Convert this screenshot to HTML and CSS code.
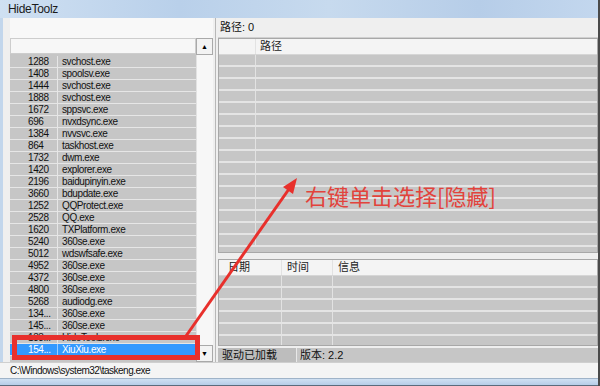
FILE: index.html
```html
<!DOCTYPE html>
<html lang="zh-cn">
<head>
    <meta charset="UTF-8">
    <title>HideToolz</title>
    <link rel="stylesheet" href="styles.css">
</head>
<body>
    <div class="window">
        <div class="titlebar"><span class="title">HideToolz</span></div>

        <div class="main">
            <div class="frame-left"></div>

            <!-- lista de processos -->
            <div class="left">
                <div class="combo"></div>
                <div class="list">
                    <div class="list-body">
                        <div class="list-head"></div>
                        <div class="row"><span class="pid">1288</span><span class="name">svchost.exe</span></div>
                        <div class="row"><span class="pid">1408</span><span class="name">spoolsv.exe</span></div>
                        <div class="row"><span class="pid">1444</span><span class="name">svchost.exe</span></div>
                        <div class="row"><span class="pid">1888</span><span class="name">svchost.exe</span></div>
                        <div class="row"><span class="pid">1672</span><span class="name">sppsvc.exe</span></div>
                        <div class="row"><span class="pid">696</span><span class="name">nvxdsync.exe</span></div>
                        <div class="row"><span class="pid">1384</span><span class="name">nvvsvc.exe</span></div>
                        <div class="row"><span class="pid">864</span><span class="name">taskhost.exe</span></div>
                        <div class="row"><span class="pid">1732</span><span class="name">dwm.exe</span></div>
                        <div class="row"><span class="pid">1420</span><span class="name">explorer.exe</span></div>
                        <div class="row"><span class="pid">2196</span><span class="name">baidupinyin.exe</span></div>
                        <div class="row"><span class="pid">3660</span><span class="name">bdupdate.exe</span></div>
                        <div class="row"><span class="pid">1252</span><span class="name">QQProtect.exe</span></div>
                        <div class="row"><span class="pid">2528</span><span class="name">QQ.exe</span></div>
                        <div class="row"><span class="pid">1620</span><span class="name">TXPlatform.exe</span></div>
                        <div class="row"><span class="pid">5240</span><span class="name">360se.exe</span></div>
                        <div class="row"><span class="pid">5012</span><span class="name">wdswfsafe.exe</span></div>
                        <div class="row"><span class="pid">4952</span><span class="name">360se.exe</span></div>
                        <div class="row"><span class="pid">4372</span><span class="name">360se.exe</span></div>
                        <div class="row"><span class="pid">4800</span><span class="name">360se.exe</span></div>
                        <div class="row"><span class="pid">5268</span><span class="name">audiodg.exe</span></div>
                        <div class="row"><span class="pid">134...</span><span class="name">360se.exe</span></div>
                        <div class="row"><span class="pid">145...</span><span class="name">360se.exe</span></div>
                        <div class="row"><span class="pid">133...</span><span class="name">HideToolz.exe</span></div>
                        <div class="row row--selected"><span class="pid">154...</span><span class="name">XiuXiu.exe</span></div>
                    </div>
                    <div class="scrollbar">
                        <div class="sb-btn">&#9650;</div>
                        <div class="sb-track"></div>
                        <div class="sb-btn">&#9660;</div>
                    </div>
                </div>
            </div>

            <div class="splitter"></div>

            <!-- painel direito -->
            <div class="right">
                <div class="path-label">路径: 0</div>

                <div class="grid grid--paths">
                    <div class="grid-head"><span class="cell c-idx"></span><span class="cell c-path">路径</span></div>
                    <div class="grid-row"><span class="cell c-idx"></span><span class="cell c-path"></span></div>
                    <div class="grid-row"><span class="cell c-idx"></span><span class="cell c-path"></span></div>
                    <div class="grid-row"><span class="cell c-idx"></span><span class="cell c-path"></span></div>
                    <div class="grid-row"><span class="cell c-idx"></span><span class="cell c-path"></span></div>
                    <div class="grid-row"><span class="cell c-idx"></span><span class="cell c-path"></span></div>
                    <div class="grid-row"><span class="cell c-idx"></span><span class="cell c-path"></span></div>
                    <div class="grid-row"><span class="cell c-idx"></span><span class="cell c-path"></span></div>
                    <div class="grid-row"><span class="cell c-idx"></span><span class="cell c-path"></span></div>
                    <div class="grid-row"><span class="cell c-idx"></span><span class="cell c-path"></span></div>
                    <div class="grid-row"><span class="cell c-idx"></span><span class="cell c-path"></span></div>
                    <div class="grid-row"><span class="cell c-idx"></span><span class="cell c-path"></span></div>
                    <div class="grid-row"><span class="cell c-idx"></span><span class="cell c-path"></span></div>
                    <div class="grid-row"><span class="cell c-idx"></span><span class="cell c-path"></span></div>
                    <div class="grid-row"><span class="cell c-idx"></span><span class="cell c-path"></span></div>
                    <div class="grid-row"><span class="cell c-idx"></span><span class="cell c-path"></span></div>
                    <div class="grid-row"><span class="cell c-idx"></span><span class="cell c-path"></span></div>
                </div>

                <div class="grid grid--log">
                    <div class="grid-head">
                        <span class="cell c-date">日期</span><span class="cell c-time">时间</span><span class="cell c-info">信息</span>
                    </div>
                    <div class="grid-row"><span class="cell c-date"></span><span class="cell c-time"></span><span class="cell c-info"></span></div>
                    <div class="grid-row"><span class="cell c-date"></span><span class="cell c-time"></span><span class="cell c-info"></span></div>
                    <div class="grid-row"><span class="cell c-date"></span><span class="cell c-time"></span><span class="cell c-info"></span></div>
                    <div class="grid-row"><span class="cell c-date"></span><span class="cell c-time"></span><span class="cell c-info"></span></div>
                    <div class="grid-row"><span class="cell c-date"></span><span class="cell c-time"></span><span class="cell c-info"></span></div>
                    <div class="grid-row"><span class="cell c-date"></span><span class="cell c-time"></span><span class="cell c-info"></span></div>
                </div>

                <div class="status">
                    <span class="st st--driver">驱动已加载</span>
                    <span class="st st--version">版本: 2.2</span>
                </div>
            </div>
        </div>

        <div class="pathbar">C:\Windows\system32\taskeng.exe</div>
        <div class="frame-bottom"></div>

        <!-- anotação vermelha -->
        <div class="redbox"></div>
        <svg class="arrow" width="600" height="386" viewBox="0 0 600 386">
            <line x1="186" y1="336" x2="289" y2="189" stroke="#e8302c" stroke-width="3"/>
            <polygon points="297,178 293,194 283,187" fill="#e8302c"/>
        </svg>
        <div class="annot-text">右键单击选择[隐藏]</div>
    </div>
</body>
</html>
```

FILE: styles.css
```css
body, html {
    margin: 0;
    padding: 0;
    width: 100%;
    height: 100%;
    overflow: hidden;
}
body {
    font-family: "Liberation Sans", "Noto Sans CJK SC", sans-serif;
    font-size: 10px;
    color: #111;
}
.window {
    position: relative;
    width: 600px;
    height: 386px;
    box-sizing: border-box;
    border-right: 2px solid #4a4a4a;
    background: #efefef;
    display: flex;
    flex-direction: column;
}
.titlebar {
    height: 18px;
    flex: none;
    background: linear-gradient(90deg, #cfe0f2 0%, #b9d0ea 30%, #c7daee 55%, #b6cde8 80%, #c3d7ee 100%);
}
.title {
    display: block;
    padding: 3px 0 0 8px;
    font-size: 12px;
    letter-spacing: -0.3px;
    line-height: 13px;
    color: #1b1b1b;
}
.main {
    height: 344px;
    flex: none;
    display: flex;
}
.frame-left {
    width: 3px;
    background: #c2d6ec;
    margin-right: 7px;
}
.left {
    width: 203px;
    display: flex;
    flex-direction: column;
}
.combo {
    height: 20px;
    background: #f8f8f8;
}
.list {
    flex: 1;
    display: flex;
    overflow: hidden;
}
.list-body {
    width: 186px;
    background: #c6c6c6;
    display: flex;
    flex-direction: column;
}
.list-head {
    height: 16px;
    flex: none;
    background: #f7f7f7;
    border: 1px solid #cdcdcd;
    box-sizing: border-box;
    margin-bottom: 2px;
}
.row {
    height: 12px;
    flex: none;
    display: flex;
    box-sizing: border-box;
    border-bottom: 1px solid #e6e6e6;
    line-height: 11px;
    letter-spacing: -0.4px;
}
.pid {
    width: 48px;
    box-sizing: border-box;
    padding-left: 18px;
    border-right: 1px solid #e6e6e6;
}
.name {
    padding-left: 4px;
}
.row--selected {
    background: #3399ff;
    color: #fff;
}
.row--selected .pid {
    border-right-color: #9cccff;
}
.scrollbar {
    width: 17px;
    display: flex;
    flex-direction: column;
    background: #f7f7f7;
}
.sb-btn {
    height: 17px;
    box-sizing: border-box;
    border: 1px solid #a9a9a9;
    background: #f3f3f3;
    font-size: 7px;
    line-height: 15px;
    text-align: center;
    color: #000;
}
.sb-track {
    flex: 1;
    border-left: 1px solid #e2e2e2;
}
.splitter {
    width: 5px;
    box-sizing: border-box;
    border-left: 2px solid #efefef;
    border-right: 2px solid #efefef;
    background: #b8b8b8;
}
.right {
    flex: 1;
    display: flex;
    flex-direction: column;
}
.path-label {
    height: 20px;
    box-sizing: border-box;
    padding: 2px 0 0 2px;
    font-size: 11px;
    line-height: 14px;
    border-bottom: 1px solid #d0d0d0;
}
.grid {
    background: #c6c6c6;
    border: 1px solid #a8a8a8;
    box-sizing: border-box;
    overflow: hidden;
}
.grid--paths {
    height: 215px;
}
.grid--log {
    height: 87px;
    margin-top: 6px;
}
.grid-head {
    height: 16px;
    display: flex;
    background: #f4f4f4;
    border-bottom: 1px solid #d6d6d6;
    box-sizing: border-box;
    font-size: 11px;
    line-height: 15px;
    color: #222;
}
.grid-row {
    height: 12px;
    display: flex;
    box-sizing: border-box;
    border-bottom: 2px solid #e4e4e4;
}
.cell {
    box-sizing: border-box;
    border-right: 1px solid #e2e2e2;
    height: 100%;
}
.c-idx { width: 37px; }
.c-path { flex: 1; padding-left: 4px; border-right: none; }
.c-date { width: 63px; padding-left: 9px; }
.c-time { width: 51px; padding-left: 5px; }
.c-info { flex: 1; padding-left: 5px; border-right: none; }
.status {
    height: 14px;
    margin-top: 2px;
    display: flex;
    font-size: 11px;
    line-height: 14px;
}
.st--driver {
    width: 79px;
    padding-left: 4px;
    box-sizing: border-box;
    background: #bdbdbd;
    border-right: 1px solid #e8e8e8;
}
.st--version {
    flex: 1;
    padding-left: 3px;
    background: #c6c6c6;
}
.pathbar {
    height: 16px;
    flex: none;
    box-sizing: border-box;
    padding-left: 10px;
    background: #f4f4f4;
    border-top: 1px solid #cfcfcf;
    line-height: 15px;
    letter-spacing: -0.5px;
}
.frame-bottom {
    flex: 1;
    background: linear-gradient(#cfe0f2, #b6cde8);
    border-top: 1px solid #9fb3c8;
    border-bottom: 1px solid #5b6b7c;
}
.redbox {
    position: absolute;
    left: 12px;
    top: 335px;
    width: 188px;
    height: 25px;
    box-sizing: border-box;
    border: 5px solid #e8302c;
}
.arrow {
    position: absolute;
    left: 0;
    top: 0;
}
.annot-text {
    position: absolute;
    left: 305px;
    top: 182px;
    font-family: "Noto Sans CJK SC", sans-serif;
    font-size: 22px;
    line-height: 26px;
    color: #e2433c;
    white-space: nowrap;
}
```
